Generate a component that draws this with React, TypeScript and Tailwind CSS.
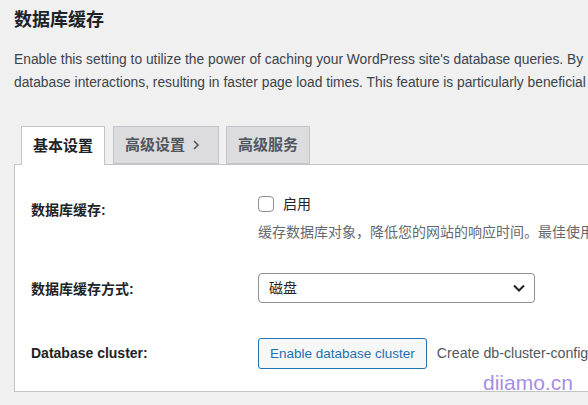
const sans = "font-['Liberation_Sans','Noto_Sans_CJK_SC',sans-serif]";

export default function App() {
  return (
    <div className={`w-[588px] h-[405px] overflow-hidden bg-[#f0f0f1] relative ${sans}`}>
      <div className="w-[900px] pl-[14px]">
        <Header />
        <Tabs />
        <Panel />
      </div>
      <div className="absolute left-[483px] top-[372px] text-[21px] text-[#a78ee6] font-['Liberation_Sans',sans-serif] leading-none">
        diiamo.cn
      </div>
    </div>
  );
}

function Header() {
  return (
    <div>
      <h1 className="pt-[8px] text-[18px] leading-[24px] font-bold text-[#1d2327]">数据库缓存</h1>
      <p className="mt-[16px] w-[590px] text-[13.8px] leading-[23px] text-[#3c434a] whitespace-nowrap">
        Enable this setting to utilize the power of caching your WordPress site's database queries. By
        <br />
        database interactions, resulting in faster page load times. This feature is particularly beneficial for
      </p>
    </div>
  );
}

function Tabs() {
  return (
    <div className="mt-[32px] pl-[7px] flex items-end gap-[8px] relative z-10">
      <div className="h-[39px] -mb-px flex items-center px-[11px] border border-b-0 border-[#c3c4c7] bg-white text-[15px] font-semibold text-[#1d2327]">
        基本设置
      </div>
      <div className="h-[38px] flex items-center pl-[11px] pr-[18px] border border-[#c3c4c7] bg-[#dcdcde] text-[15px] font-semibold text-[#50575e]">
        高级设置
        <svg width="8" height="12" viewBox="0 0 8 12" className="ml-[7px]">
          <path d="M2 2l4 4-4 4" fill="none" stroke="#50575e" strokeWidth="1.6" />
        </svg>
      </div>
      <div className="h-[38px] -ml-px flex items-center px-[11px] border border-[#c3c4c7] bg-[#dcdcde] text-[15px] font-semibold text-[#50575e]">
        高级服务
      </div>
    </div>
  );
}

function Panel() {
  return (
    <div className="border border-[#c3c4c7] bg-white pl-[16px] pt-[29px] pb-[22px] text-[14px] text-[#1d2327]">
      <Row label="数据库缓存:" labelPad="pt-[6px]">
        <div className="flex items-center h-[20px]">
          <span className="w-[16px] h-[16px] rounded-[4px] border border-[#8c8f94] bg-white" />
          <span className="ml-[9px] leading-[20px]">启用</span>
        </div>
        <div className="mt-[8px] leading-[20px] text-[#646970] whitespace-nowrap">
          缓存数据库对象，降低您的网站的响应时间。最佳使用
        </div>
      </Row>
      <Row label="数据库缓存方式:" labelPad="pt-[6px]" className="mt-[31px]">
        <div className="w-[277px] h-[30px] flex items-center justify-between pl-[10px] pr-[8px] rounded-[4px] border border-[#8c8f94] bg-white">
          <span className="leading-[20px]">磁盘</span>
          <svg width="14" height="14" viewBox="0 0 14 14">
            <path d="M2 4.5l5 5 5-5" fill="none" stroke="#1d2327" strokeWidth="2" />
          </svg>
        </div>
      </Row>
      <Row label="Database cluster:" labelPad="pt-[5px]" className="mt-[35px]">
        <div className="flex items-center">
          <button className="h-[31px] px-[11px] rounded-[3px] border border-[#2271b1] bg-[#f6f7f7] text-[#2271b1] text-[13.5px] leading-[20px] whitespace-nowrap">
            Enable database cluster
          </button>
          <span className="ml-[10px] text-[14.2px] text-[#50575e] whitespace-nowrap">Create db-cluster-config.php to configure</span>
        </div>
      </Row>
    </div>
  );
}

function Row({
  label,
  labelPad,
  className = "",
  children,
}: {
  label: string;
  labelPad: string;
  className?: string;
  children: React.ReactNode;
}) {
  return (
    <div className={`flex ${className}`}>
      <div className={`w-[227px] shrink-0 font-semibold leading-[20px] ${labelPad}`}>{label}</div>
      <div>{children}</div>
    </div>
  );
}
